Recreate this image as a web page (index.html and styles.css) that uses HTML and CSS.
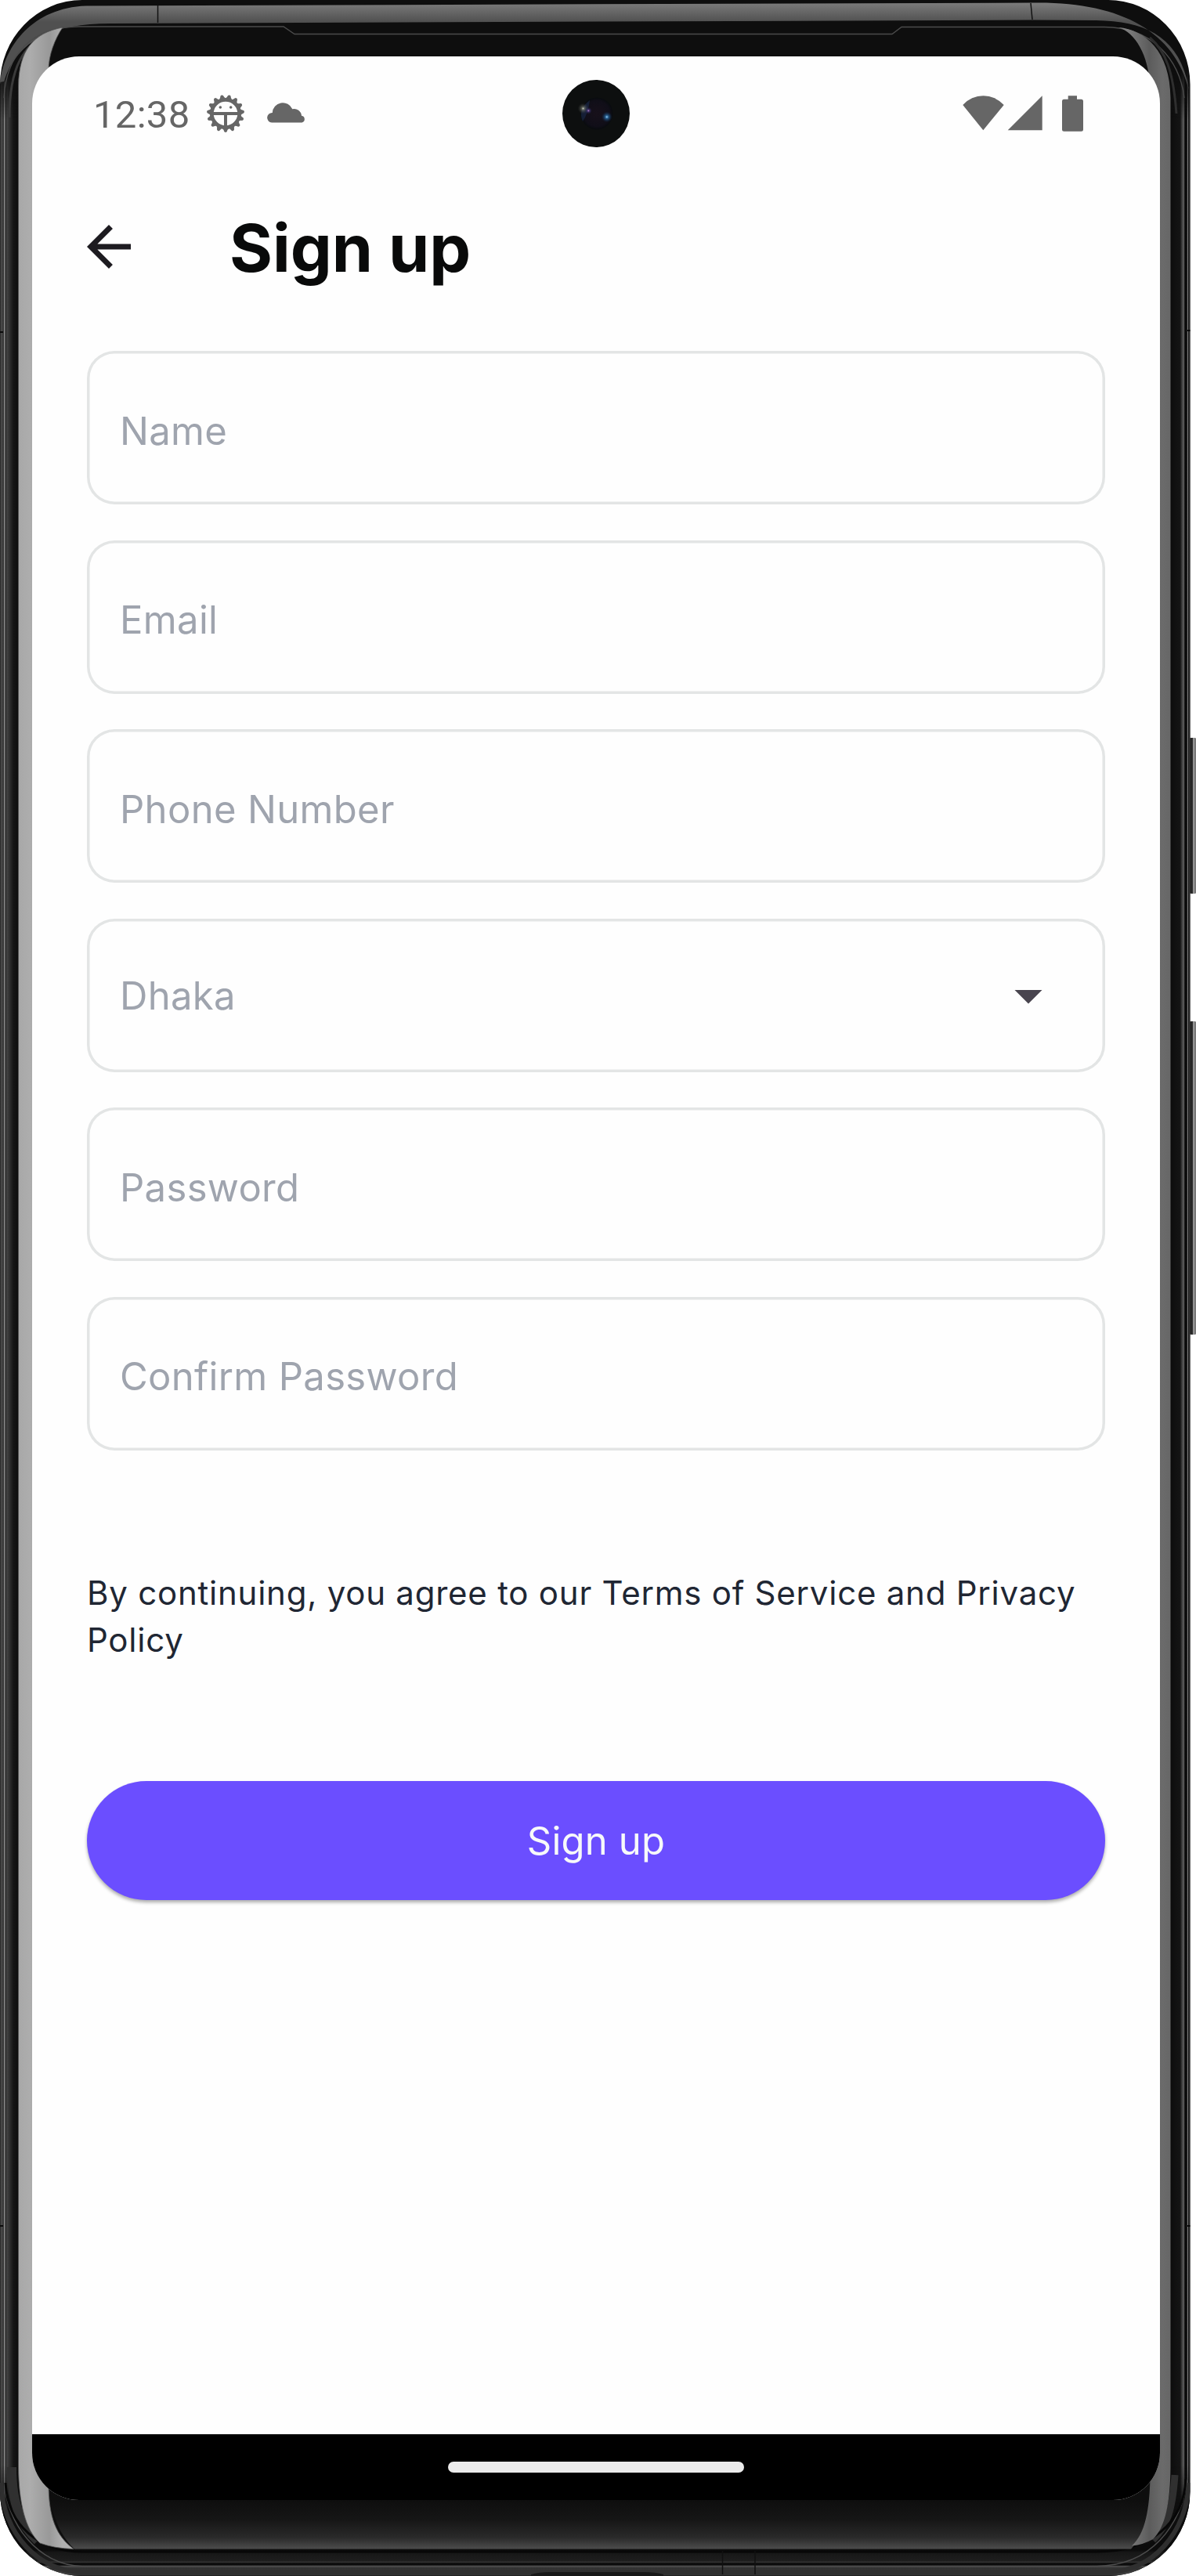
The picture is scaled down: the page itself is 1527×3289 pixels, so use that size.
FILE: index.html
```html
<!DOCTYPE html>
<html lang="en">
<head>
<meta charset="utf-8">
<title>Sign up</title>
<link rel="stylesheet" href="styles.css">
</head>
<body>
<div class="device">
  <svg class="frame" width="1527" height="3289" viewBox="0 0 1527 3289" aria-hidden="true">
    <defs>
      <linearGradient id="topBand" x1="0" y1="0" x2="0" y2="28" gradientUnits="userSpaceOnUse">
        <stop offset=".15" stop-color="#7a7a7a"/><stop offset="1" stop-color="#505050"/>
      </linearGradient>
      <linearGradient id="leftRim" x1="0" y1="0" x2="24" y2="0" gradientUnits="userSpaceOnUse">
        <stop offset="0" stop-color="#1a1a1a"/><stop offset=".06" stop-color="#4a4a4a"/><stop offset=".15" stop-color="#3c3c3c"/>
        <stop offset=".18" stop-color="#0a0a0a"/><stop offset=".2" stop-color="#858585"/><stop offset=".26" stop-color="#858585"/>
        <stop offset=".29" stop-color="#161616"/><stop offset=".36" stop-color="#444"/><stop offset=".7" stop-color="#161616"/><stop offset="1" stop-color="#0c0c0c"/>
      </linearGradient>
      <linearGradient id="rightRim" x1="1494" y1="0" x2="1520" y2="0" gradientUnits="userSpaceOnUse">
        <stop offset="0" stop-color="#0c0c0c"/><stop offset=".5" stop-color="#151515"/><stop offset=".6" stop-color="#484848"/>
        <stop offset=".68" stop-color="#5c5c5c"/><stop offset=".72" stop-color="#0a0a0a"/><stop offset=".82" stop-color="#0a0a0a"/>
        <stop offset=".86" stop-color="#8a8a8a"/><stop offset=".9" stop-color="#181818"/><stop offset="1" stop-color="#555"/>
      </linearGradient>
      <linearGradient id="leftGlow" x1="24" y1="0" x2="80" y2="0" gradientUnits="userSpaceOnUse">
        <stop offset="0" stop-color="#a8a8a8"/><stop offset=".25" stop-color="#adadad"/><stop offset=".7" stop-color="#999"/><stop offset="1" stop-color="#b0b0b0"/>
      </linearGradient>
      <linearGradient id="rightGlow" x1="1440" y1="0" x2="1495" y2="0" gradientUnits="userSpaceOnUse">
        <stop offset="0" stop-color="#7d7d7d"/><stop offset=".5" stop-color="#5c5c5c"/><stop offset=".8" stop-color="#6b6b6b"/><stop offset="1" stop-color="#666"/>
      </linearGradient>
      <linearGradient id="chin" x1="0" y1="3192" x2="0" y2="3256" gradientUnits="userSpaceOnUse">
        <stop offset="0" stop-color="#0e0e0e"/><stop offset=".4" stop-color="#161616"/><stop offset=".75" stop-color="#2a2a2a"/><stop offset="1" stop-color="#505050"/>
      </linearGradient>
      <linearGradient id="bottomRim" x1="0" y1="3256" x2="0" y2="3289" gradientUnits="userSpaceOnUse">
        <stop offset="0" stop-color="#0c0c0c"/><stop offset=".1" stop-color="#171717"/><stop offset=".42" stop-color="#1e1e1e"/>
        <stop offset=".46" stop-color="#383838"/><stop offset=".51" stop-color="#0c0c0c"/><stop offset=".58" stop-color="#0c0c0c"/>
        <stop offset=".62" stop-color="#4c4c4c"/><stop offset=".7" stop-color="#303030"/><stop offset=".92" stop-color="#424242"/><stop offset="1" stop-color="#1a1a1a"/>
      </linearGradient>
      <linearGradient id="key" x1="1518" y1="0" x2="1527" y2="0" gradientUnits="userSpaceOnUse">
        <stop offset="0" stop-color="#161616"/><stop offset=".5" stop-color="#2c2c2c"/><stop offset=".6" stop-color="#999"/><stop offset="1" stop-color="#6e6e6e"/>
      </linearGradient>
      <linearGradient id="fade" x1="0" y1="90" x2="0" y2="3210" gradientUnits="userSpaceOnUse">
        <stop offset="0" stop-color="#000"/><stop offset=".02" stop-color="#fff"/><stop offset=".98" stop-color="#fff"/><stop offset="1" stop-color="#000"/>
      </linearGradient>
      <mask id="rimFade" maskUnits="userSpaceOnUse" x="0" y="0" width="1527" height="3289"><rect width="1527" height="3289" fill="url(#fade)"/></mask>
      <clipPath id="body"><path d="M105 0H1414A105 108 0 0 1 1519.500 108V3181A105 108 0 0 1 1414 3289H105A105 108 0 0 1 0 3181V108A105 108 0 0 1 105 0Z"/></clipPath>
    </defs>
    <!-- side keys -->
    <rect x="1516" y="942" width="14" height="199" rx="5" fill="url(#key)"/>
    <rect x="1516" y="1304" width="14" height="400" rx="5" fill="url(#key)"/>
    <g clip-path="url(#body)">
      <rect width="1527" height="3289" fill="#0e0e0e"/>
      <g mask="url(#rimFade)">
        <rect y="90" width="24" height="3120" fill="url(#leftRim)"/>
        <rect x="1494" y="90" width="26" height="3120" fill="url(#rightRim)"/>
      </g>
      <!-- bottom rails -->
      <path d="M0 3181C2 3225 40 3256 95 3256H1420C1475 3256 1515 3225 1519 3181V3289H0Z" fill="url(#bottomRim)"/>
      <path d="M1 3170C3 3235 50 3284 105 3284H1414C1470 3284 1515 3235 1518 3170" fill="none" stroke="#2f2f2f" stroke-width="6"/>
      <path d="M6 3170C8 3220 48 3276 105 3276.500H1400C1470 3276 1508 3225 1516 3165" fill="none" stroke="#4d4d4d" stroke-width="1.500"/>
      <path d="M15 3150C15 3200 28 3225 48 3244" fill="none" stroke="#303030" stroke-width="12"/>
      <path d="M1500 3160C1497 3205 1490 3225 1472 3243" fill="none" stroke="#303030" stroke-width="9"/>
      <path d="M7 3170C10 3225 50 3258 105 3258H1400C1470 3258 1512 3220 1514 3165" fill="none" stroke="#070707" stroke-width="3"/>
      <path d="M62 3170C64 3205 74 3235 95 3254.500H1444C1462 3235 1468 3205 1469 3160Z" fill="url(#chin)"/>
      <!-- top band wrapping the corners -->
      <path d="M0 105C6 58 42 10 110 7.500L1320 3.500C1430 2 1500 40 1518 115L1515 100C1500 45 1460 27 1400 26L1316 25.500L140 30C70 30 22 50 5 104Z" fill="url(#topBand)"/>
      <path d="M5 125C8 70 40 34 100 34H362L376 43.500H1139L1151 34.500H1410C1470 34.500 1506 75 1512 125" fill="none" stroke="#4b4b4b" stroke-width="1.400"/>
      <path d="M12 150C12 85 30 58 62 42" fill="none" stroke="#3a3a3a" stroke-width="3"/>
      <path d="M1502 145C1498 90 1488 65 1468 48" fill="none" stroke="#2e2e2e" stroke-width="3"/>
      <path d="M201.500 7V29M1316 4L1318 25" stroke="#111" stroke-width="1.500"/>
      <!-- curved glass reflections -->
      <path d="M80 35C42 42 24 65 23.500 110V3150C24 3195 32 3230 51 3247Q70 3254 94 3254.500C72 3238 62 3215 62 3170V90C62 70 70 50 80 35Z" fill="url(#leftGlow)" stroke="#555" stroke-width=".8"/>
      <path d="M1428 35C1462 38 1494 65 1494.500 125V3150C1494 3195 1488 3227 1472 3242Q1460 3249 1445 3250.500C1462 3235 1468 3205 1468.500 3160V110C1466 70 1450 42 1428 35Z" fill="url(#rightGlow)"/>
      <!-- antenna seams and port -->
      <path d="M922.500 3257V3287M964 3257V3287" stroke="#101010" stroke-width="1.500"/>
      <path d="M678 3287Q688 3284 702 3284H823Q837 3284 847 3287V3289H678Z" fill="#171717"/>
      <path d="M0 424H4M0 2842H4M1516 422H1520M1516 2842H1520" stroke="#0a0a0a" stroke-width="2"/>
    </g>
  </svg>

  <main class="screen">
    <header class="status">
      <span class="clock">12:38</span>
      <svg class="gear" width="50" height="50" viewBox="-25 -25 50 50" fill="#666">
        <defs><path id="tooth" d="M-4.800-18.500Q-2.300-20.500-2-22.600A2.100 2.100 0 0 1 2-22.600Q2.300-20.500 4.800-18.500Z"/></defs>
        <use href="#tooth" transform="rotate(12)"/><use href="#tooth" transform="rotate(36)"/><use href="#tooth" transform="rotate(60)"/>
        <use href="#tooth" transform="rotate(84)"/><use href="#tooth" transform="rotate(108)"/><use href="#tooth" transform="rotate(132)"/>
        <use href="#tooth" transform="rotate(156)"/><use href="#tooth" transform="rotate(180)"/><use href="#tooth" transform="rotate(204)"/>
        <use href="#tooth" transform="rotate(228)"/><use href="#tooth" transform="rotate(252)"/><use href="#tooth" transform="rotate(276)"/>
        <use href="#tooth" transform="rotate(300)"/><use href="#tooth" transform="rotate(324)"/><use href="#tooth" transform="rotate(348)"/>
        <circle r="17.500" fill="none" stroke="#666" stroke-width="4.400"/>
        <path d="M-17-2H17V2H2V17H-2V2H-17Z"/>
        <circle cx="-6.700" cy="-8" r="1.800"/><circle cx="6.700" cy="-8" r="1.800"/>
      </svg>
      <svg class="cloud" width="49" height="27" viewBox="0 0 49 27" fill="#666">
        <path d="M6 26.500A6.100 6.100 0 0 1 6.800 14A13.300 13.300 0 0 1 32.300 9.300A9.500 9.500 0 0 1 44 17.700A4.500 4.500 0 0 1 44.500 26.500Z"/>
      </svg>
      <svg class="camera" width="88" height="88" viewBox="-44 -44 88 88">
        <defs>
          <radialGradient id="lens" cx=".5" cy=".5" r=".5"><stop offset="0" stop-color="#17101a"/><stop offset=".8" stop-color="#100e18"/><stop offset="1" stop-color="#080b0e"/></radialGradient>
          <radialGradient id="white"><stop offset="0" stop-color="#c8ccb8"/><stop offset=".3" stop-color="#7f8478" stop-opacity=".6"/><stop offset="1" stop-color="#333" stop-opacity="0"/></radialGradient>
          <radialGradient id="blue"><stop offset="0" stop-color="#9fd8ff"/><stop offset=".3" stop-color="#2d79b8" stop-opacity=".7"/><stop offset="1" stop-color="#0d2a50" stop-opacity="0"/></radialGradient>
          <radialGradient id="violet"><stop offset="0" stop-color="#c08ad0"/><stop offset=".35" stop-color="#4b3a80" stop-opacity=".7"/><stop offset="1" stop-color="#1a2050" stop-opacity="0"/></radialGradient>
        </defs>
        <circle r="43" fill="#0d0f0f"/>
        <circle cx="1" r="20.500" fill="url(#lens)"/>
        <path d="M-8-17Q-24-5-17 10Q-10 0-8-17Z" fill="#1c2f55" opacity=".5"/>
        <circle cx="-16.500" cy="-6.500" r="7" fill="url(#white)"/>
        <circle cx="-9.700" cy="-3.700" r="4.500" fill="url(#violet)"/>
        <circle cx="13.800" cy="4.300" r="7" fill="url(#blue)"/>
      </svg>
      <svg class="signals" width="155" height="46" viewBox="0 0 155 46" fill="#666">
        <path d="M.300 12A35.200 35.200 0 0 1 52.700 12L26.300 44.300Z"/>
        <path d="M57.700 44.300H101.700V.300Z"/>
        <path d="M134.700.200H146V4.700H151.500Q154 4.700 154 7.200V43.200Q154 45.700 151.500 45.700H129.500Q127 45.700 127 43.200V7.200Q127 4.700 129.500 4.700H134.700Z"/>
      </svg>
    </header>

    <div class="toolbar">
      <svg class="back" width="84" height="84" viewBox="0 0 24 24" fill="#1d1b20"><path d="M20 11H7.830L13.420 5.410 12 4 4 12 12 20 13.410 18.590 7.830 13H20Z"/></svg>
      <h1 class="title">Sign up</h1>
    </div>

    <form class="form">
      <div class="field"><span class="hint">Name</span></div>
      <div class="field"><span class="hint">Email</span></div>
      <div class="field"><span class="hint">Phone Number</span></div>
      <div class="field select"><span class="hint">Dhaka</span>
        <svg width="84" height="84" viewBox="0 0 24 24" fill="#49454f"><path d="M7 10l5 5 5-5z"/></svg></div>
      <div class="field"><span class="hint">Password</span></div>
      <div class="field"><span class="hint">Confirm Password</span></div>
      <p class="terms">By continuing, you agree to our Terms of Service and Privacy Policy</p>
      <button class="submit" type="button">Sign up</button>
    </form>

    <footer class="nav"><div class="handle"></div></footer>
  </main>
</div>
</body>
</html>
```
FILE: styles.css
```css
* { box-sizing: border-box; }

body {
  margin: 0;
  background: #fff;
  font-family: Inter, "Liberation Sans", sans-serif;
}

.device {
  display: grid;
  width: 1527px;
  height: 3289px;
  overflow: hidden;
}

.frame, .screen { grid-area: 1 / 1; }
.frame { display: block; }

.screen {
  display: flex;
  flex-direction: column;
  width: 1440px;
  height: 3120px;
  margin: 72px 0 0 41px;
  border-radius: 60px;
  overflow: hidden;
  background: #fefefe;
}

.status {
  position: relative;
  display: flex;
  align-items: center;
  height: 146px;
  padding: 0 97px 0 78px;
}
.clock {
  width: 144px;
  padding-top: 3px;
  font: 400 49px/58px Roboto, sans-serif;
  letter-spacing: .3px;
  color: #666;
}
.cloud { margin: -4px 0 0 28px; }
.camera { position: absolute; left: 676px; top: 28.5px; }
.signals { margin-left: auto; }

.toolbar {
  display: flex;
  align-items: center;
  height: 194px;
  padding-left: 56px;
}
.title {
  margin: 0 0 0 112px;
  padding-top: 3px;
  font-size: 84px;
  font-weight: 700;
  line-height: 104px;
  color: #090a0a;
}

.form {
  display: flex;
  flex-direction: column;
  gap: 45.5px;
  padding: 36px 70px 0;
}
.field {
  display: flex;
  align-items: center;
  justify-content: space-between;
  height: 196px;
  padding: 7px 56.5px 0 42px;
  border-radius: 35px;
  box-shadow: inset 0 0 0 3.5px #e3e5e5;
}
.select { padding-top: 0; }
.hint {
  padding-top: 2px;
  font-size: 49px;
  line-height: 60px;
  letter-spacing: .33px;
  color: #9fa4ae;
}
.select .hint { padding-top: 3px; }
.terms {
  margin: 106.5px 0 0;
  font-size: 42px;
  line-height: 60px;
  letter-spacing: .77px;
  color: #202633;
}
.submit {
  height: 152px;
  margin: 105px 0 0;
  padding: 2px 0 0;
  border: 0;
  border-radius: 76px;
  background: #6b4eff;
  box-shadow: 0 3px 4px rgba(0, 0, 0, .32);
  font: 400 49px/60px Inter, "Liberation Sans", sans-serif;
  letter-spacing: .2px;
  color: #f7f9fa;
}

.nav {
  display: flex;
  justify-content: center;
  align-items: center;
  height: 84px;
  margin-top: auto;
  background: #000;
}
.handle {
  width: 378px;
  height: 14px;
  border-radius: 7px;
  background: #ebebeb;
}
```
